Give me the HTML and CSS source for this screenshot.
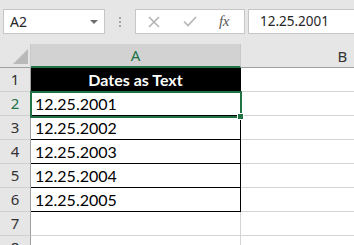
FILE: index.html
```html
<!DOCTYPE html>
<html>
<head>
<meta charset="utf-8">
<link rel="stylesheet" href="styles.css">
</head>
<body>
<div class="app">
  <div class="fbar">
    <div class="namebox"><span class="ref">A2</span><i class="caret"></i></div>
    <div class="grip"><i></i><i></i><i></i></div>
    <div class="funcs">
      <svg class="ic-x" width="12" height="12" viewBox="0 0 12 12"><path d="M1 1 L11 11 M11 1 L1 11" stroke="#b4b4b4" stroke-width="1.6" fill="none"/></svg>
      <svg class="ic-check" width="14" height="11" viewBox="0 0 14 11"><path d="M1 5.5 L5 9.5 L13 1" stroke="#b4b4b4" stroke-width="1.6" fill="none"/></svg>
      <span class="fx">fx</span>
    </div>
    <div class="formula">12.25.2001</div>
  </div>
  <div class="sheet">
    <div class="corner"><svg width="31" height="24" viewBox="0 0 31 24"><polygon points="28,5 28,20 13,20" fill="#b9b9b9"/></svg></div>
    <div class="ch sel">A</div>
    <div class="ch">B</div>

    <div class="rh">1</div><div class="c title">Dates as Text</div><div class="c"></div>
    <div class="rh act">2</div><div class="c data">12.25.2001</div><div class="c"></div>
    <div class="rh">3</div><div class="c data">12.25.2002</div><div class="c"></div>
    <div class="rh">4</div><div class="c data">12.25.2003</div><div class="c"></div>
    <div class="rh">5</div><div class="c data">12.25.2004</div><div class="c"></div>
    <div class="rh">6</div><div class="c data">12.25.2005</div><div class="c"></div>
    <div class="rh">7</div><div class="c"></div><div class="c"></div>
    <div class="rh">8</div><div class="c"></div><div class="c"></div>

    <div class="active"><i class="handle"></i></div>
  </div>
</div>
</body>
</html>
```

FILE: styles.css
```css
html, body {
  margin: 0;
  padding: 0;
}
body {
  background: #e6e6e6;
  width: 354px;
  height: 245px;
  overflow: hidden;
  font-family: "Noto Sans", "Open Sans", sans-serif;
}
.app {
  width: 354px;
  height: 245px;
  overflow: hidden;
}
.fbar {
  height: 44px;
  box-sizing: border-box;
  padding: 9px 0 0 3px;
  display: flex;
  align-items: flex-start;
  background: #e6e6e6;
}
.namebox {
  width: 102px;
  height: 25px;
  box-sizing: border-box;
  border: 1px solid #c6c6c6;
  background: #fff;
  display: flex;
  align-items: center;
  justify-content: space-between;
  padding: 0 6px 0 6px;
  font-size: 14px;
  color: #262626;
}
.caret {
  width: 0;
  height: 0;
  border-left: 4px solid transparent;
  border-right: 4px solid transparent;
  border-top: 4px solid #6f6f6f;
  margin-top: 1px;
}
.grip {
  width: 30px;
  height: 25px;
  display: flex;
  flex-direction: column;
  align-items: center;
  justify-content: center;
  gap: 2px;
}
.grip i {
  width: 2px;
  height: 2px;
  background: #a5a5a5;
}
.funcs {
  width: 110px;
  height: 25px;
  box-sizing: border-box;
  border: 1px solid #c6c6c6;
  background: #fff;
  display: flex;
  align-items: center;
}
.ic-x {
  margin-left: 12px;
}
.ic-check {
  margin-left: 23px;
}
.fx {
  margin-left: 22px;
  font-family: "Liberation Serif", serif;
  font-style: italic;
  font-size: 15px;
  color: #595959;
  letter-spacing: -0.5px;
}
.formula {
  flex: 1;
  margin-left: 3px;
  margin-right: -4px;
  height: 25px;
  box-sizing: border-box;
  border: 1px solid #c6c6c6;
  border-right: none;
  background: #fff;
  padding-left: 11px;
  font-size: 13.5px;
  line-height: 23px;
  color: #262626;
}
.sheet {
  position: relative;
  display: grid;
  grid-template-columns: 31px 210px 204px;
  grid-auto-rows: 24px;
  background: #fff;
}
.corner {
  background: #e6e6e6;
  border-right: 1px solid #c8c8c8;
  border-bottom: 1px solid #9f9f9f;
  box-sizing: border-box;
  line-height: 0;
}
.corner svg {
  display: block;
}
.ch {
  background: #e6e6e6;
  box-sizing: border-box;
  border-right: 1px solid #c8c8c8;
  border-bottom: 1px solid #9f9f9f;
  font-size: 15px;
  color: #333;
  text-align: center;
  line-height: 24px;
}
.ch.sel {
  background: #d2d2d2;
  border-bottom: 2px solid #217346;
  color: #217346;
  line-height: 23px;
}
.rh {
  background: #e6e6e6;
  box-sizing: border-box;
  border-right: 1px solid #9f9f9f;
  border-bottom: 1px solid #d0d0d0;
  font-size: 15px;
  color: #333;
  text-align: center;
  line-height: 23px;
}
.rh.act {
  color: #217346;
}
.c {
  box-sizing: border-box;
  border-right: 1px solid #d4d4d4;
  border-bottom: 1px solid #d4d4d4;
  font-family: "Lato", "Liberation Sans", sans-serif;
  font-size: 16px;
  color: #000;
  line-height: 24px;
}
.c.title {
  background: #000;
  color: #fff;
  font-weight: bold;
  text-align: center;
  border-right: 1px solid #000;
  border-bottom: 1px solid #000;
}
.c.data {
  padding-left: 4px;
  border-right: 1px solid #000;
  border-bottom: 1px solid #000;
}
.active {
  position: absolute;
  left: 30px;
  top: 47px;
  width: 212px;
  height: 27px;
  box-sizing: border-box;
  border: 2px solid #217346;
}
.handle {
  position: absolute;
  right: -4px;
  bottom: -4px;
  width: 5px;
  height: 5px;
  background: #217346;
  border: 1px solid #fff;
}
```
